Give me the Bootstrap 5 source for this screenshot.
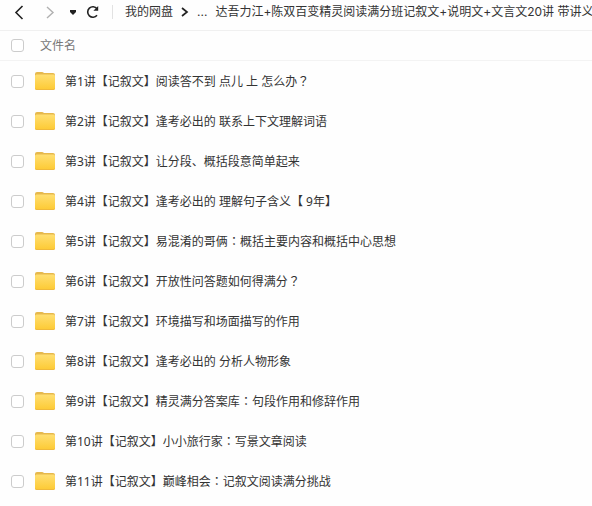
<!DOCTYPE html>
<html lang="zh-CN">
<head>
<meta charset="utf-8">
<meta name="viewport" content="width=device-width, initial-scale=1">
<title>我的网盘</title>
<link href="https://cdn.jsdelivr.net/npm/bootstrap@5.3.0/dist/css/bootstrap.min.css" rel="stylesheet">
<style>
body { font: 12px/20px "Noto Sans", "Noto Sans CJK SC", sans-serif; color: #333; background: #fefefe; overflow: hidden; }
.toolbar { height: 31px; padding: 1px 0 8px 12px; border-bottom: 1px solid #f0f0f0; }
.path-text { font-family: Inter, "Noto Sans CJK SC", sans-serif; }
.tool { width: 16px; height: 20px; color: #222; }
.split { width: 1px; height: 14px; background: #e2e2e2; margin: 0 12px; }
.head { height: 30px; padding-left: 11px; border-bottom: 1px solid #f3f3f3; color: #777; }
.file { height: 40px; padding-left: 11px; }
.file label { padding-top: 2px; }
.punct { font-family: "Noto Sans CJK JP", sans-serif; line-height: 1; }
.tick.form-check-input { width: 13px; height: 13px; margin: 0; border: 1px solid #ccc; border-radius: 3px; background-color: #fff; }
.folder { width: 20px; height: 18px; margin: 0 10px 0 11px; }
.title-label { margin-left: 16px; }
</style>
<script src="https://cdn.jsdelivr.net/npm/bootstrap@5.3.0/dist/js/bootstrap.bundle.min.js"></script>
</head>
<body>
<svg class="position-absolute" width="0" height="0" aria-hidden="true">
  <defs>
    <linearGradient id="gold" x1="0" y1="0" x2="0" y2="1"><stop offset="0" stop-color="#ffdf72"/><stop offset="1" stop-color="#fdcb37"/></linearGradient>
  </defs>
  <symbol id="folder" viewBox="0 0 20 18">
    <path d="M0 2Q0 0 2 0H7Q8 0 9 1L10 1H18Q20 1 20 3V9H0Z" fill="#e6b84c"/>
    <rect y="3" width="20" height="15" rx="1.5" fill="#f0b93a"/>
    <rect y="2.500" width="20" height="14.500" rx="1.5" fill="url(#gold)"/>
  </symbol>
</svg>
<header class="toolbar d-flex align-items-center text-nowrap">
  <button type="button" class="tool btn p-0 border-0 d-flex align-items-center" aria-label="后退"><svg width="16" height="18" fill="none" stroke="currentColor" stroke-width="1.600"><path d="M10.500 3L4 9.500L10.500 16"/></svg></button>
  <button type="button" class="tool btn p-0 border-0 d-flex align-items-center ms-3" disabled aria-label="前进"><svg width="16" height="18" fill="none" stroke="#888" stroke-width="1.400"><path d="M3 4L9 9.500L3 15"/></svg></button>
  <button type="button" class="tool btn p-0 border-0 d-flex align-items-center ms-1" aria-label="历史"><svg width="16" height="16" fill="currentColor"><path d="M6 6H12V8L9 11L6 8Z"/></svg></button>
  <button type="button" class="tool btn p-0 border-0 d-flex align-items-center ms-1" aria-label="刷新"><svg width="16" height="16" fill="none" stroke="currentColor" stroke-width="1.600"><path d="M13 4.800A5.200 5.200 0 1 0 13 11.200"/><path d="M14.200 2V6.800H9.400Z" fill="currentColor" stroke="none"/></svg></button>
  <span class="split flex-shrink-0"></span>
  <nav class="path-text d-flex align-items-center" aria-label="路径">
    <a href="#" class="text-reset text-decoration-none">我的网盘</a>
    <svg class="ms-2" width="8" height="10" fill="none" stroke="#222" stroke-width="1.700"><path d="M1 1L6 5L1 9"/></svg>
    <a href="#" class="text-reset text-decoration-none ms-2">...</a>
    <span class="ms-2">达吾力江+陈双百变精灵阅读满分班记叙文+说明文+文言文20讲 带讲义</span>
  </nav>
</header>
<main>
  <div class="head d-flex align-items-center"><input class="tick form-check-input" type="checkbox" id="all"><label for="all" class="title-label">文件名</label></div>
  <ul class="list-unstyled mb-0 text-nowrap">
    <li class="file d-flex align-items-center"><input class="tick form-check-input" type="checkbox" id="f1"><svg class="folder"><use href="#folder"/></svg><label for="f1">第1讲【记叙文】阅读答不到 点儿 上 怎么办<span class="punct" lang="ja">？</span></label></li>
    <li class="file d-flex align-items-center"><input class="tick form-check-input" type="checkbox" id="f2"><svg class="folder"><use href="#folder"/></svg><label for="f2">第2讲【记叙文】逢考必出的 联系上下文理解词语</label></li>
    <li class="file d-flex align-items-center"><input class="tick form-check-input" type="checkbox" id="f3"><svg class="folder"><use href="#folder"/></svg><label for="f3">第3讲【记叙文】让分段、概括段意简单起来</label></li>
    <li class="file d-flex align-items-center"><input class="tick form-check-input" type="checkbox" id="f4"><svg class="folder"><use href="#folder"/></svg><label for="f4">第4讲【记叙文】逢考必出的 理解句子含义【 9年】</label></li>
    <li class="file d-flex align-items-center"><input class="tick form-check-input" type="checkbox" id="f5"><svg class="folder"><use href="#folder"/></svg><label for="f5">第5讲【记叙文】易混淆的哥俩<span class="punct" lang="ja">：</span>概括主要内容和概括中心思想</label></li>
    <li class="file d-flex align-items-center"><input class="tick form-check-input" type="checkbox" id="f6"><svg class="folder"><use href="#folder"/></svg><label for="f6">第6讲【记叙文】开放性问答题如何得满分<span class="punct" lang="ja">？</span></label></li>
    <li class="file d-flex align-items-center"><input class="tick form-check-input" type="checkbox" id="f7"><svg class="folder"><use href="#folder"/></svg><label for="f7">第7讲【记叙文】环境描写和场面描写的作用</label></li>
    <li class="file d-flex align-items-center"><input class="tick form-check-input" type="checkbox" id="f8"><svg class="folder"><use href="#folder"/></svg><label for="f8">第8讲【记叙文】逢考必出的 分析人物形象</label></li>
    <li class="file d-flex align-items-center"><input class="tick form-check-input" type="checkbox" id="f9"><svg class="folder"><use href="#folder"/></svg><label for="f9">第9讲【记叙文】精灵满分答案库<span class="punct" lang="ja">：</span>句段作用和修辞作用</label></li>
    <li class="file d-flex align-items-center"><input class="tick form-check-input" type="checkbox" id="f10"><svg class="folder"><use href="#folder"/></svg><label for="f10">第10讲【记叙文】小小旅行家<span class="punct" lang="ja">：</span>写景文章阅读</label></li>
    <li class="file d-flex align-items-center"><input class="tick form-check-input" type="checkbox" id="f11"><svg class="folder"><use href="#folder"/></svg><label for="f11">第11讲【记叙文】巅峰相会<span class="punct" lang="ja">：</span>记叙文阅读满分挑战</label></li>
  </ul>
</main>
</body>
</html>
